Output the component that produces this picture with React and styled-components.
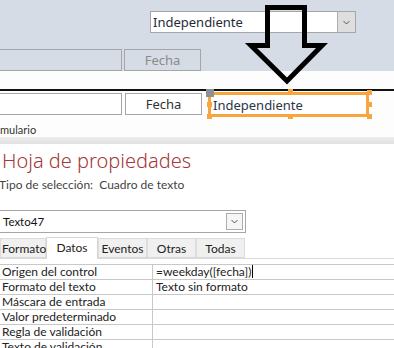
import React from 'react';
import styled, { createGlobalStyle } from 'styled-components';

const Global = createGlobalStyle`
  html, body { margin: 0; padding: 0; }
  body {
    width: 394px;
    height: 348px;
    overflow: hidden;
    background: #ffffff;
    font-family: "Noto Sans", "Open Sans", sans-serif;
    color: #333;
  }
`;

const UI_FONT = `"Lato", "Noto Sans", sans-serif`;

const Page = styled.div`
  width: 394px;
  height: 348px;
  overflow: hidden;
`;

/* ---------- Form designer ---------- */
const Designer = styled.section`
  position: relative;
  background: #fdfdfd;
`;

const HeaderBand = styled.div`
  height: 71px;
  background: #d6dce5;
  display: flex;
  flex-direction: column;
  padding-top: 11px;
  box-sizing: border-box;
`;

const CanvasRow = styled.div`
  display: flex;
  align-items: flex-start;
  margin-top: ${(p) => p.$top || 0}px;
  padding-left: ${(p) => p.$left || 0}px;
`;

const Combo = styled.div`
  display: flex;
  align-items: stretch;
  width: ${(p) => p.$w}px;
  height: ${(p) => p.$h}px;
  box-sizing: border-box;
  border: 1px solid #a6a6a6;
  background: #fff;
  margin-left: ${(p) => p.$ml || 0}px;
`;

const ComboText = styled.div`
  flex: 1;
  display: flex;
  align-items: center;
  padding-left: ${(p) => p.$pl || 2}px;
  font-family: ${(p) => (p.$ui ? UI_FONT : 'inherit')};
  font-size: ${(p) => p.$fs || 13}px;
  color: ${(p) => (p.$ui ? '#111' : '#1f2a3a')};
  white-space: nowrap;
  overflow: hidden;
`;

const ComboButton = styled.div`
  width: ${(p) => p.$w}px;
  display: flex;
  align-items: center;
  justify-content: center;
  background: ${(p) => p.$bg};
  box-sizing: border-box;
  margin: ${(p) => p.$m || 0}px;
  border: ${(p) => (p.$boxed ? '1px solid #adadad' : 'none')};
  border-left: 1px solid #adadad;
`;

const Field = styled.div`
  width: ${(p) => p.$w}px;
  height: 22px;
  box-sizing: border-box;
  border: 1px solid #a6a6a6;
  background: ${(p) => (p.$transparent ? 'transparent' : '#fff')};
  margin-left: ${(p) => p.$ml || 0}px;
  display: flex;
  align-items: center;
  justify-content: center;
  font-size: 13px;
  color: ${(p) => (p.$muted ? '#8a8a8a' : '#333')};
`;

const WhiteBand = styled.div`
  height: 18px;
  background: #fdfdfd;
`;

const SectionLine = styled.div`
  height: 2px;
  background: #111;
`;

const SelectedBox = styled.div`
  position: relative;
  width: 161px;
  height: 25px;
  box-sizing: border-box;
  border: 3px solid #f8a53f;
  background: #fff;
  margin-left: 6px;
  margin-top: -1px;
  display: flex;
  align-items: center;
  padding-left: 2px;
  font-size: 13px;
  color: #2b3548;
`;

const Handle = styled.span`
  position: absolute;
  left: ${(p) => p.$x}px;
  top: ${(p) => p.$y}px;
  width: ${(p) => p.$s || 5}px;
  height: ${(p) => p.$s || 5}px;
  background: ${(p) => p.$c || '#f8a53f'};
`;

const SectionLabel = styled.div`
  font-family: ${UI_FONT};
  font-size: 11px;
  line-height: 14px;
  height: 14px;
  margin-top: 6px;
  color: #333;
  white-space: nowrap;
`;

const Splitter = styled.div`
  height: 7px;
  background: linear-gradient(#ededed, #e1e1e1);
`;

const ArrowSvg = styled.svg`
  position: absolute;
  left: 240px;
  top: 0;
`;

/* ---------- Property sheet ---------- */
const Sheet = styled.section`
  padding-top: 5px;
`;

const Title = styled.h1`
  margin: 0 0 0 2px;
  font-size: 20px;
  line-height: 24px;
  font-weight: 300;
  color: #a4373a;
  white-space: nowrap;
`;

const SelectionType = styled.div`
  margin: 5px 0 0 -1px;
  font-family: ${UI_FONT};
  font-size: 12px;
  line-height: 14px;
  color: #444;
  white-space: pre;
`;

const TabStrip = styled.div`
  display: flex;
  align-items: flex-end;
  height: 22px;
  box-sizing: border-box;
  margin-top: 4px;
  border-bottom: 1px solid #dadada;
`;

const Tab = styled.div`
  width: ${(p) => p.$w}px;
  height: ${(p) => (p.$active ? 22 : 20)}px;
  box-sizing: border-box;
  margin-bottom: ${(p) => (p.$active ? -1 : 0)}px;
  background: ${(p) => (p.$active ? '#ffffff' : '#f0f0f0')};
  border: 1px solid ${(p) => (p.$active ? '#d6d6d6' : '#dcdcdc')};
  border-bottom: ${(p) => (p.$active ? 'none' : '1px solid #dadada')};
  display: flex;
  align-items: ${(p) => (p.$active ? 'flex-start' : 'center')};
  padding-top: ${(p) => (p.$active ? 2 : 0)}px;
  justify-content: ${(p) => (p.$start ? 'flex-start' : 'center')};
  padding-left: ${(p) => (p.$start ? 1 : 0)}px;
  font-family: ${UI_FONT};
  font-size: 12px;
  color: #222;
  white-space: nowrap;
`;

const Grid = styled.div`
  margin-top: 5px;
  border-top: 1px solid #c8c8c8;
`;

const Row = styled.div`
  display: grid;
  grid-template-columns: 152px 1fr;
  height: 15px;
  box-sizing: border-box;
  border-bottom: 1px solid #c8c8c8;
`;

const Cell = styled.div`
  font-family: ${UI_FONT};
  font-size: 12px;
  line-height: 14px;
  height: 14px;
  padding-left: ${(p) => (p.$value ? 3 : 2)}px;
  border-left: ${(p) => (p.$value ? '1px solid #c8c8c8' : 'none')};
  color: #222;
  white-space: nowrap;
`;

const Caret = styled.span`
  display: inline-block;
  width: 1px;
  height: 13px;
  background: #000;
  vertical-align: -2px;
  margin-left: 1px;
`;

const Chevron = ({ size = 9 }) => (
  <svg width={size} height={size} viewBox="0 0 9 9">
    <path d="M1.5 3 L4.5 6 L7.5 3" fill="none" stroke="#555" strokeWidth="1" />
  </svg>
);

const rows = [
  ['Origen del control', '=weekday([fecha])', true],
  ['Formato del texto', 'Texto sin formato'],
  ['Máscara de entrada', ''],
  ['Valor predeterminado', ''],
  ['Regla de validación', ''],
  ['Texto de validación', ''],
];

const tabs = [
  ['Formato', 46, false, true],
  ['Datos', 52, true],
  ['Eventos', 49],
  ['Otras', 49],
  ['Todas', 49],
];

export default function App() {
  return (
    <Page>
      <Global />
      <Designer>
        <HeaderBand>
          <CanvasRow $left={150}>
            <Combo $w={206} $h={22}>
              <ComboText>Independiente</ComboText>
              <ComboButton $w={18} $bg="#dedede">
                <Chevron />
              </ComboButton>
            </Combo>
          </CanvasRow>
          <CanvasRow $top={16}>
            <Field $w={124} $ml={-2} $transparent />
            <Field $w={77} $ml={2} $transparent $muted>
              Fecha
            </Field>
          </CanvasRow>
        </HeaderBand>
        <WhiteBand />
        <SectionLine />
        <CanvasRow $top={2}>
          <Field $w={124} $ml={-2} />
          <Field $w={77} $ml={3}>
            Fecha
          </Field>
          <SelectedBox>
            Independiente
            <Handle $x={-5} $y={-6} $s={8} $c="#8c9097" />
            <Handle $x={77} $y={-6} />
            <Handle $x={156} $y={-5} />
            <Handle $x={-4} $y={7} />
            <Handle $x={156} $y={7} />
            <Handle $x={-4} $y={19} />
            <Handle $x={77} $y={19} />
            <Handle $x={156} $y={19} />
          </SelectedBox>
        </CanvasRow>
        <SectionLabel>mulario</SectionLabel>
        <ArrowSvg width="100" height="90" viewBox="0 0 100 90">
          <polygon
            points="27.5,7.5 64.5,7.5 64.5,45.5 82,45.5 47,81 11,45.5 27.5,45.5"
            fill="none"
            stroke="#000"
            strokeWidth="5"
            strokeLinejoin="miter"
          />
        </ArrowSvg>
      </Designer>
      <Splitter />
      <Sheet>
        <Title>Hoja de propiedades</Title>
        <SelectionType>{'Tipo de selección:  Cuadro de texto'}</SelectionType>
        <CanvasRow $top={18}>
          <Combo $w={247} $h={23} $ml={-1}>
            <ComboText $fs={11.5} $pl={3} $ui>
              Texto47
            </ComboText>
            <ComboButton $w={17} $bg="#f6f6f6" $m={2} $boxed>
              <Chevron />
            </ComboButton>
          </Combo>
        </CanvasRow>
        <TabStrip>
          {tabs.map(([label, w, active, start]) => (
            <Tab key={label} $w={w} $active={active} $start={start}>
              {label}
            </Tab>
          ))}
        </TabStrip>
        <Grid>
          {rows.map(([label, value, caret]) => (
            <Row key={label}>
              <Cell>{label}</Cell>
              <Cell $value>
                {value}
                {caret && <Caret />}
              </Cell>
            </Row>
          ))}
        </Grid>
      </Sheet>
    </Page>
  );
}
